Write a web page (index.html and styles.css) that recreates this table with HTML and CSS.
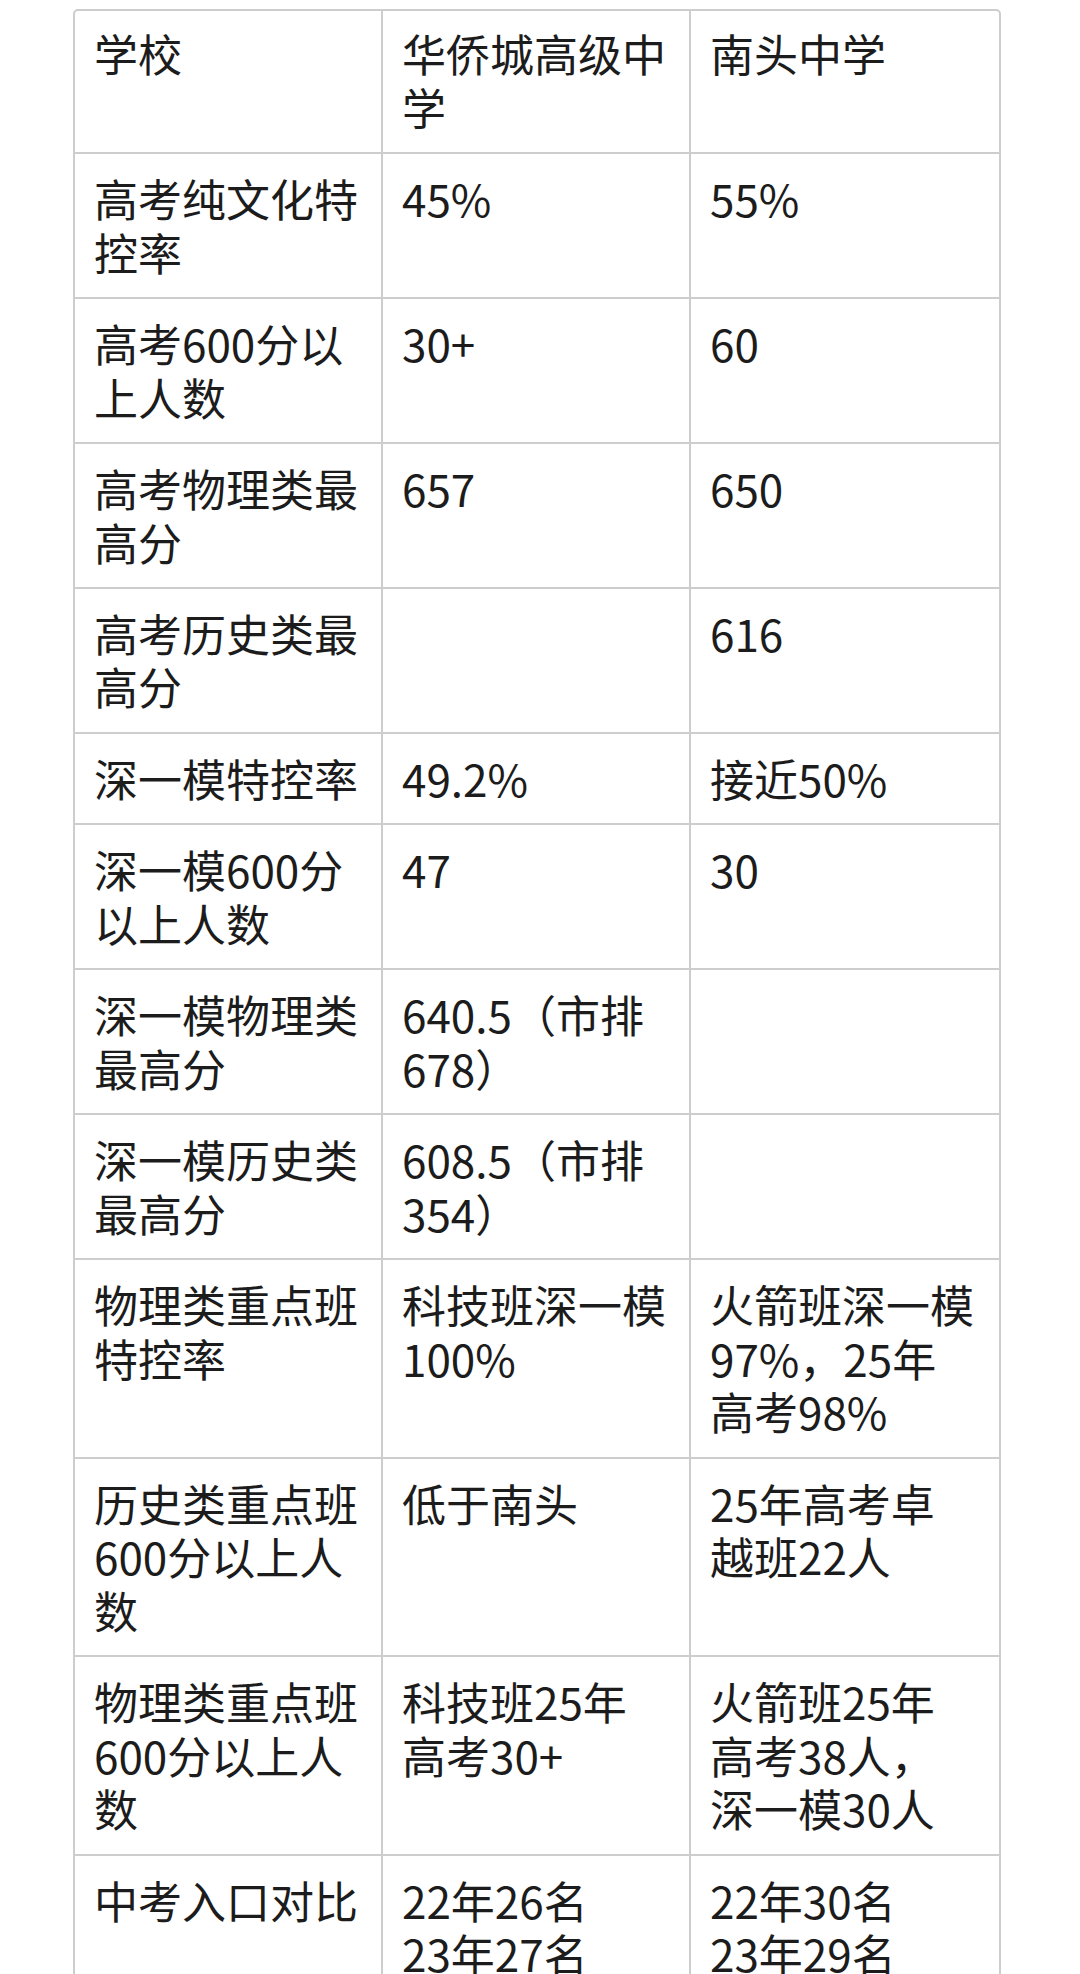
FILE: index.html
```html
<!DOCTYPE html>
<html lang="zh-CN">
<head>
<meta charset="utf-8">
<title>学校对比</title>
<link rel="stylesheet" href="styles.css">
</head>
<body>
<div class="page">
  <table class="compare">
    <colgroup><col class="c"><col class="c"><col class="c"></colgroup>
    <tbody>
      <tr class="head"><td>学校</td><td>华侨城高级中学</td><td>南头中学</td></tr>
      <tr><td>高考纯文化特控率</td><td>45%</td><td>55%</td></tr>
      <tr><td>高考600分以上人数</td><td>30+</td><td>60</td></tr>
      <tr><td>高考物理类最高分</td><td>657</td><td>650</td></tr>
      <tr><td>高考历史类最高分</td><td></td><td>616</td></tr>
      <tr><td>深一模特控率</td><td>49.2%</td><td>接近50%</td></tr>
      <tr><td>深一模600分以上人数</td><td>47</td><td>30</td></tr>
      <tr><td>深一模物理类最高分</td><td>640.5（市排678）</td><td></td></tr>
      <tr><td>深一模历史类最高分</td><td>608.5（市排354）</td><td></td></tr>
      <tr><td>物理类重点班特控率</td><td>科技班深一模100%</td><td>火箭班深一模97%，25年高考98%</td></tr>
      <tr><td>历史类重点班600分以上人数</td><td>低于南头</td><td>25年高考卓越班22人</td></tr>
      <tr><td>物理类重点班600分以上人数</td><td>科技班25年高考30+</td><td>火箭班25年高考38人，深一模30人</td></tr>
      <tr><td>中考入口对比</td><td>22年26名<br>23年27名</td><td>22年30名<br>23年29名</td></tr>
    </tbody>
  </table>
</div>
</body>
</html>
```

FILE: styles.css
```css
html, body {
  margin: 0;
  padding: 0;
  background: #ffffff;
}

.page {
  padding: 9px 0 0 73px;
}

.compare {
  width: 928px;
  table-layout: fixed;
  border-collapse: separate;
  border-spacing: 0;
  border: 2px solid #cdcdcd;
  border-radius: 5px;
  font-family: "Noto Sans CJK SC", "Noto Sans", sans-serif;
  font-size: 44px;
  line-height: 53.65px;
  color: #1c1c1c;
}

.compare td {
  vertical-align: top;
  padding: 18px 21px 17.65px 19px;
  border-right: 2px solid #cdcdcd;
  border-bottom: 2px solid #cdcdcd;
  word-break: break-all;
}

.compare td:last-child {
  border-right: none;
}

.compare tr.head td {
  padding-top: 16px;
}
```
